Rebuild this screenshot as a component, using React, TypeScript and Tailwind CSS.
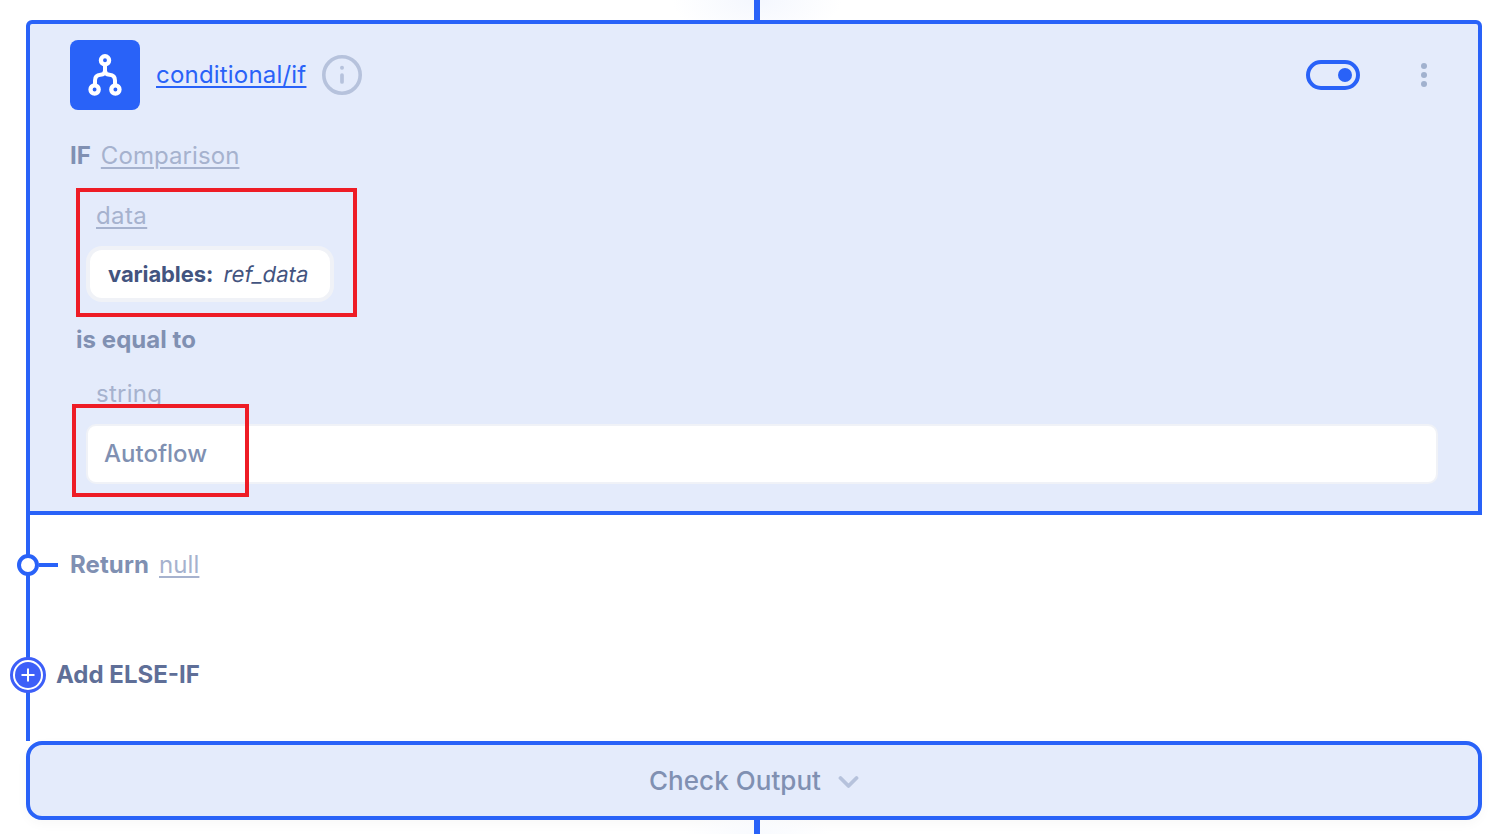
import React from "react";

function BranchIcon() {
  return (
    <svg width="70" height="70" viewBox="0 0 70 70" fill="none" stroke="#fff" strokeWidth="4">
      <circle cx="35" cy="20.3" r="4.1" strokeWidth="4.3" />
      <circle cx="24.600" cy="49.500" r="4.100" strokeWidth="4.300" />
      <circle cx="45.400" cy="49.500" r="4.100" strokeWidth="4.300" />
      <path d="M35 25v5.500q0 4-4.500 4.300q-5.500.300-5.500 5.700v4.500M35 30.500q0 4 4.500 4.300q5.500.300 5.500 5.700v4.500" />
    </svg>
  );
}

function InfoIcon() {
  return (
    <svg width="40" height="40" viewBox="0 0 40 40" fill="none">
      <circle cx="20" cy="20" r="18.2" stroke="#b6c2dc" strokeWidth="3.6" />
      <circle cx="20" cy="12.700" r="2" fill="#b6c2dc" />
      <path d="M20 20v7" stroke="#b6c2dc" strokeWidth="3.700" strokeLinecap="round" />
    </svg>
  );
}

const link = "underline decoration-2 underline-offset-[3px] text-[#a6b2ce]";

export default function App() {
  return (
    <main className="relative flex h-[834px] w-[1490px] flex-col overflow-hidden bg-white pl-[26px] font-['Inter',sans-serif] text-2xl leading-[30px] text-[#8090b2]">
      <div className="flex h-5 w-[1462px] shrink-0 justify-center bg-[radial-gradient(ellipse_85px_40px_at_center_top,#f4f7fe,#ffffff)]">
        <div className="h-5 w-1.5 bg-[#2962f8]" />
      </div>

      <section className="h-[495px] w-[1456px] shrink-0 rounded-t-md border-4 border-[#2962f8] bg-[#e4ebfb] pt-4 pr-10 pl-10">
        <header className="flex h-[70px] items-center">
          <div className="size-[70px] rounded-lg bg-[#2962f8]">
            <BranchIcon />
          </div>
          <a className="ml-4 w-[150px] tracking-[0.2px] whitespace-nowrap text-[#2962f8] underline decoration-2 underline-offset-[3px]">conditional/if</a>
          <div className="ml-4">
            <InfoIcon />
          </div>
          <div className="ml-auto flex h-[30px] w-[54px] items-center justify-end rounded-full border-4 border-[#2962f8] pr-1">
            <div className="size-3.5 rounded-full bg-[#2962f8]" />
          </div>
          <div className="mr-[11px] ml-[61px] flex flex-col gap-[3.2px]">
            <div className="size-1.5 rounded-full bg-[#a1b1ce]" />
            <div className="size-1.5 rounded-full bg-[#a1b1ce]" />
            <div className="size-1.5 rounded-full bg-[#a1b1ce]" />
          </div>
        </header>

        <div className="mt-[31px] flex gap-2.5">
          <b className="font-bold">IF</b>
          <span className={`${link} tracking-[0.08px]`}>Comparison</span>
        </div>
        <div className="mt-[30px] ml-[26px]">
          <span className={`${link} tracking-[0.4px]`}>data</span>
        </div>
        <div className="mt-[15px] ml-4 flex h-14 w-[248px] items-center gap-2.5 rounded-2xl border-4 border-[#f0f2f7] bg-white pl-[18px] text-[22px] text-[#43547f]">
          <b className="font-bold tracking-[-0.1px]">variables:</b>
          <span className="ml-[0.5px] inline-block -skew-x-[10deg] tracking-[0.1px]">ref_data</span>
        </div>
        <div className="mt-[23px] ml-1.5 font-bold tracking-[0.05px]">is equal to</div>
        <div className="mt-6 ml-[26px] tracking-[0.25px] text-[#a6b2ce]">string</div>
        <div className="mt-[15px] ml-4 flex h-[60px] w-[1352px] items-center rounded-[10px] border-2 border-[#f0f2f7] bg-white pl-4 font-medium">
          Autoflow
        </div>
      </section>

      <section className="h-[226px] shrink-0 border-l-4 border-[#2962f8] pt-[35px]">
        <div className="-ml-[13px] flex items-center">
          <div className="size-[22px] rounded-full border-4 border-[#2962f8] bg-white" />
          <div className="h-1 w-[19px] bg-[#2962f8]" />
          <b className="ml-3 font-bold tracking-[0.1px]">Return</b>
          <span className={`${link} ml-2.5 tracking-[0.1px]`}>null</span>
        </div>
        <div className="mt-[77px] -ml-5 flex items-center">
          <svg width="36" height="36" viewBox="0 0 36 36">
            <circle cx="18" cy="18" r="16.500" fill="#fff" stroke="#3d5ff8" strokeWidth="3" />
            <circle cx="18" cy="18" r="13" fill="#3d5ff8" />
            <path d="M18 11.500v13M11.500 18h13" stroke="#fff" strokeWidth="2" />
          </svg>
          <b className="ml-2.5 font-bold text-[#5f6f98]">Add ELSE-IF</b>
        </div>
      </section>

      <button className="flex h-[79px] w-[1456px] shrink-0 items-center justify-center rounded-2xl border-4 border-[#2962f8] bg-[#e4ebfb] text-[26px] font-medium tracking-[0.05px] shadow-[0_4px_12px_rgba(0,0,0,0.03)]">
        Check Output
        <svg className="ml-4" width="22" height="22" viewBox="0 0 22 22" fill="none" stroke="#b6c2dc" strokeWidth="3.8" strokeLinecap="round" strokeLinejoin="round">
          <path d="M3.500 8l8 8 8-8" />
        </svg>
      </button>
      <div className="flex h-3.5 w-[1462px] shrink-0 justify-center bg-[radial-gradient(ellipse_75px_24px_at_center_bottom,#f8fafe,transparent)]">
        <div className="h-3.5 w-1.5 bg-[#2962f8]" />
      </div>

      <div className="absolute top-[188px] left-[76px] h-[129px] w-[281px] border-4 border-[#ee1c25]" />
      <div className="absolute top-[404px] left-[72px] h-[93px] w-[177px] border-4 border-[#ee1c25]" />
    </main>
  );
}
